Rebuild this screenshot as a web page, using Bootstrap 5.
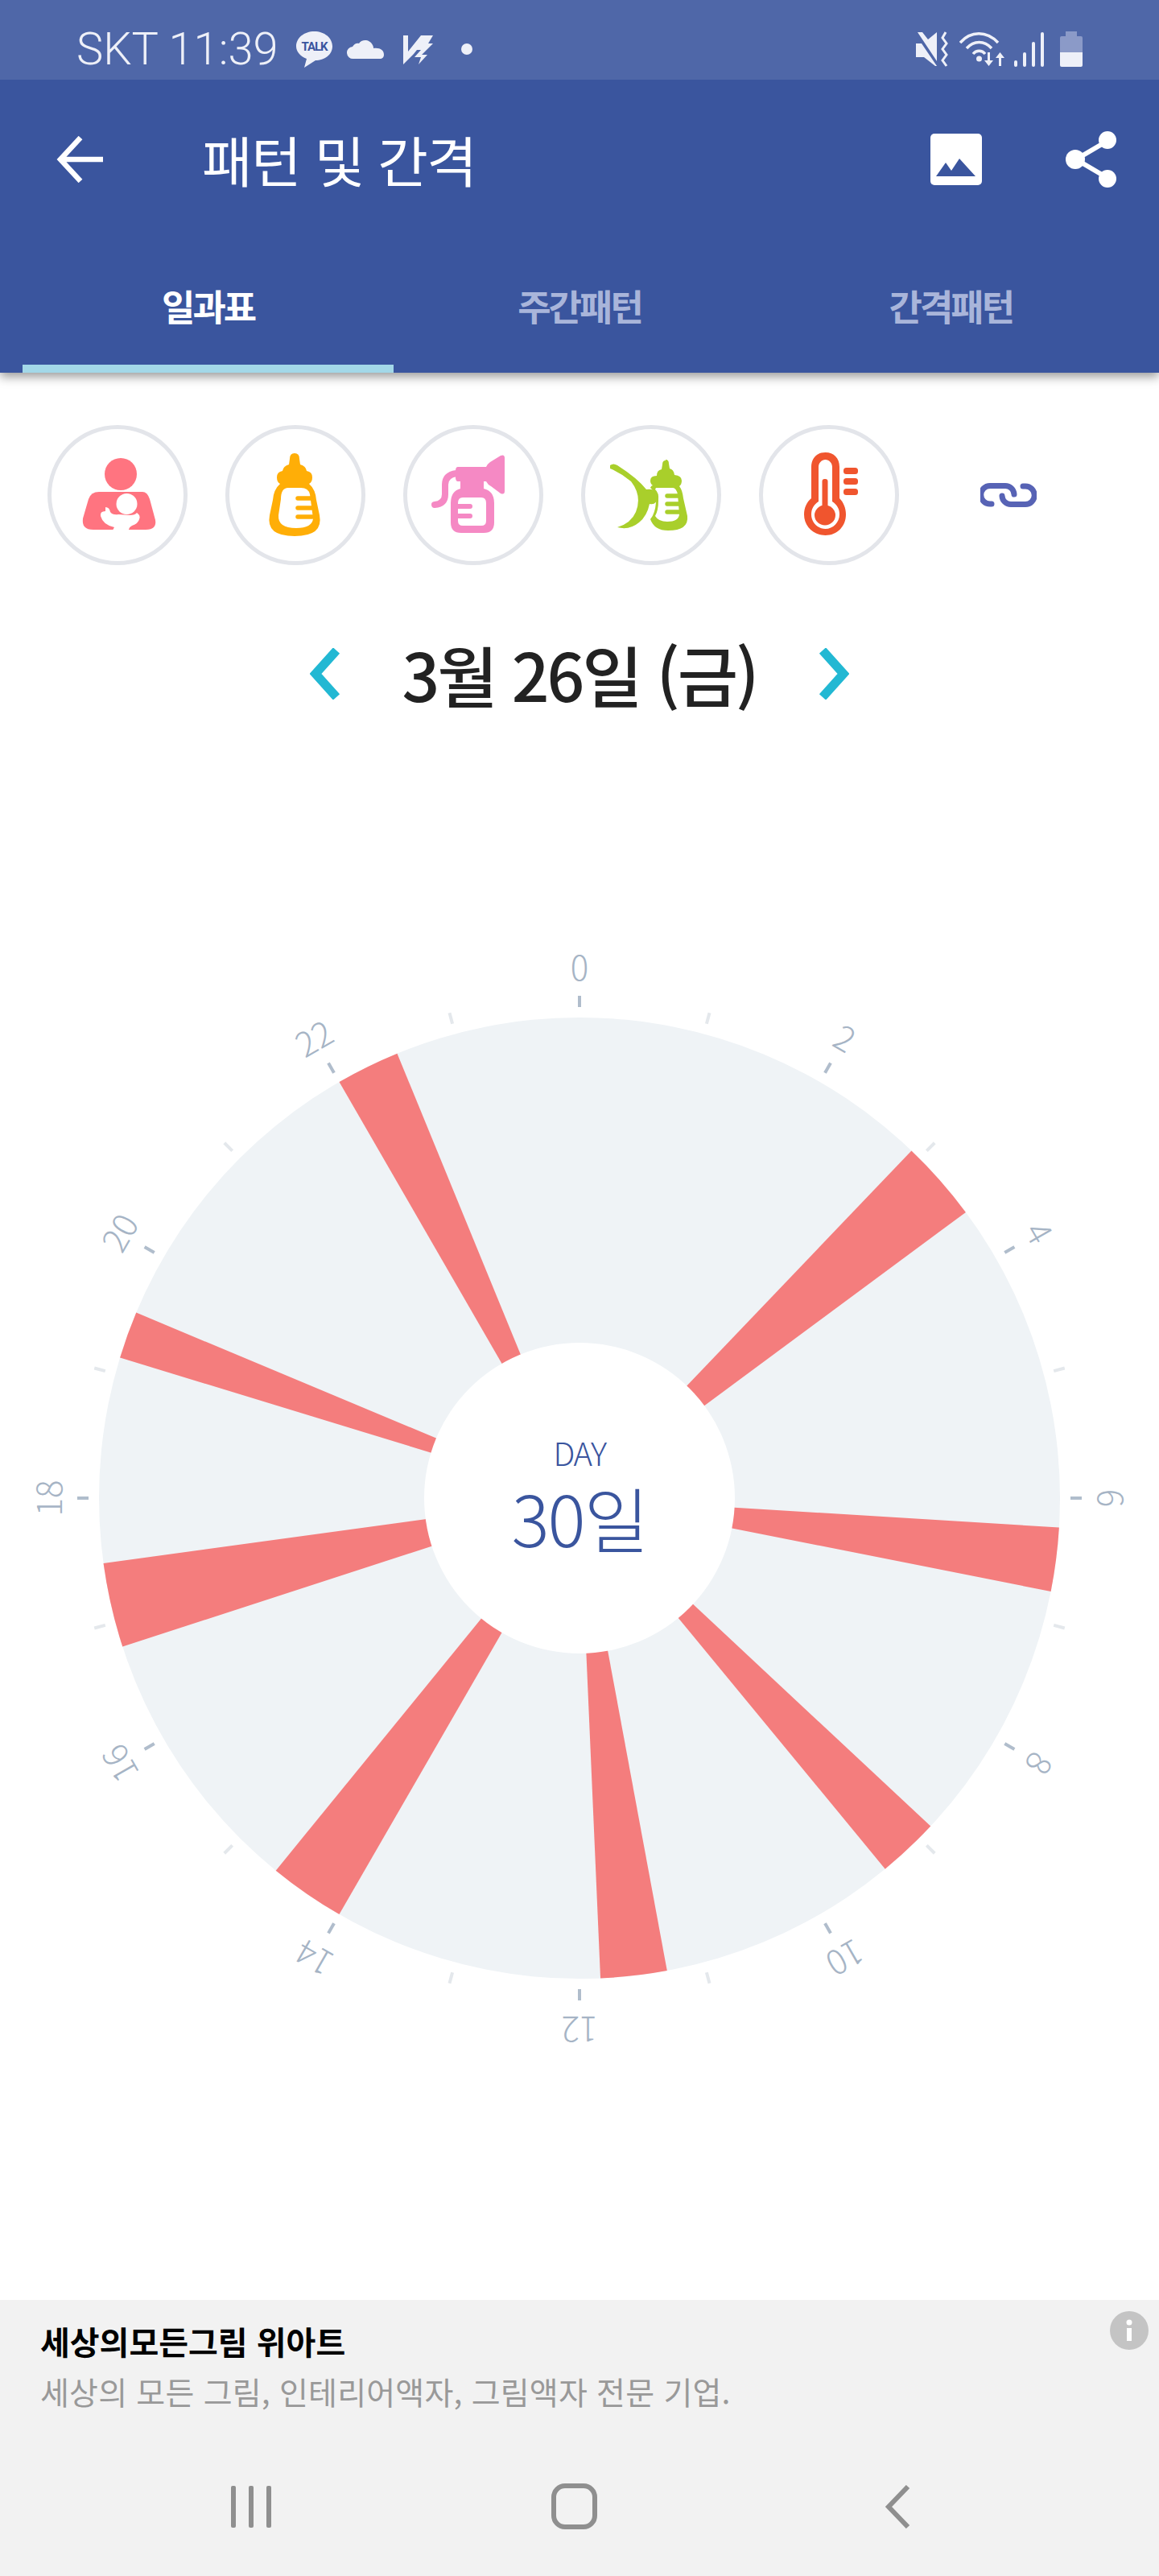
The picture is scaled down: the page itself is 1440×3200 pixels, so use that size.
<!DOCTYPE html>
<html lang="ko">
<head>
  <meta charset="UTF-8" />
  <meta name="viewport" content="width=device-width, initial-scale=1" />
  <title>패턴 및 간격</title>
  <link href="https://cdn.jsdelivr.net/npm/bootstrap@5.3.0/dist/css/bootstrap.min.css" rel="stylesheet" />
  <style>
    body {
      background: #fff;
      font-family: "Noto Sans CJK KR", "Noto Sans", sans-serif;
    }
    svg { display: block; flex-shrink: 0; }

    .status-strip {
      height: 99px;
      background: #4f67a8;
      color: #eef0f8;
      padding: 22px 95px 0;
      position: relative;
      z-index: 2;
    }
    .status-text {
      font-family: Roboto, sans-serif;
      font-weight: 300;
      font-size: 56px;
      line-height: 1;
      margin-right: 4px;
    }
    .status-left { gap: 17px; }
    .status-right { gap: 12px; }
    .bolt-icon { margin-left: 7px; }

    .app-head { background: #3a559e; height: 364px; box-shadow: 0 5px 12px rgba(0,0,0,.4); position: relative; z-index: 1; }
    .app-toolbar { height: 198px; padding: 0 52px 0 70px; }
    .app-title {
      font-size: 68px;
      line-height: 1;
      color: #fff;
      margin: 0 0 0 123px;
      letter-spacing: -1.500px;
      font-weight: 400;
    }
    .toolbar-actions { gap: 104px; }

    .tab-strip { margin: 0 28px; }
    .tab-strip .nav-link {
      color: #a9b5da;
      font-size: 45px;
      font-weight: 700;
      line-height: 45px;
      letter-spacing: -3px;
      padding: 60px 0 51px;
      border-bottom: 10px solid transparent;
      border-radius: 0;
    }
    .tab-strip .nav-link.active { color: #fff; border-bottom-color: #a3d8e8; }

    .entry-row { margin-top: 65px; padding-left: 59px; gap: 47px; }
    .entry-circle {
      width: 174px;
      height: 174px;
      border: 5px solid #e3e5ea;
      border-radius: 50%;
      background: #fff;
    }
    .link-btn { margin-left: 54px; }

    .date-row { margin-top: 90px; gap: 77px; height: 90px; }
    .date-text {
      font-size: 82px;
      line-height: 90px;
      font-weight: 500;
      color: #222;
      letter-spacing: -3px;
      white-space: nowrap;
    }

    .dial { margin-top: 118px; }
    .dial-hour { font-size: 42px; font-weight: 300; fill: #a6b4c5; }
    .dial-caption { font-size: 40px; font-weight: 300; fill: #3a559e; letter-spacing: -1.500px; }
    .dial-count { font-size: 88px; font-weight: 300; fill: #3a559e; letter-spacing: -2px; }

    .ad-panel { background: #f2f2f2; height: 343px; position: relative; }
    .ad-copy { padding: 28px 50px 0; }
    .ad-title { font-size: 40px; font-weight: 700; line-height: 46px; color: #000; }
    .ad-sub { font-size: 39px; line-height: 46px; color: #999; margin-top: 16px; letter-spacing: .2px; }
    .ad-info { position: absolute; right: 13px; top: 14px; }
    .softkeys { padding: 0 309px 0 287px; margin-top: 92px; }
    .home-key { margin-right: 10px; }
  </style>
</head>
<body>
<div class="d-flex flex-column min-vh-100">

  <!-- Status bar -->
  <div class="status-strip d-flex align-items-center justify-content-between">
    <div class="status-left d-flex align-items-center">
      <span class="status-text">SKT 11:39</span>
      <svg width="47" height="46" viewBox="0 0 47 46">
        <path fill="#eef0f8" d="M23.5 1C36 1 46 9 46 19.500S36 37 25 37L11 46l3-11C6 32 1 26 1 19.500 1 9 11 1 23.500 1z"/>
        <text x="23.500" y="25" text-anchor="middle" font-size="15" font-weight="700" fill="#3a559e" font-family="Roboto, sans-serif" letter-spacing="-1">TALK</text>
      </svg>
      <svg width="46" height="26" viewBox="0 0 46 26">
        <path fill="#eef0f8" d="M8 25a7.500 7.500 0 0 1-1-15C9 6 13 5 15 6c3-5 13-6 17 2 1 2 1 3 1 4 8-1 13 2 13 8 0 3-2 5-5 5z"/>
      </svg>
      <svg class="bolt-icon" width="38" height="38" viewBox="0 0 38 38">
        <path fill="#eef0f8" d="M0 2l6 0 0 20L22 2h15l-6 10 6 0-14 14h7L19 38l3-9h-8l8-9h-5l-4 5L0 38z"/>
      </svg>
      <svg class="ms-3" width="16" height="16" viewBox="0 0 16 16"><circle cx="8" cy="8" r="7" fill="#eef0f8"/></svg>
    </div>
    <div class="status-right d-flex align-items-center">
      <svg width="42" height="44" viewBox="0 0 42 44">
        <path fill="#eef0f8" d="M0 15h7l19 28h-2L10 32H0zM2 1l24 36V1L15 10 8 1z"/>
        <path fill="none" stroke="#eef0f8" stroke-width="3" d="M37 1l-4 7 5 7-5 7 5 7-5 7 5 7"/>
      </svg>
      <svg width="56" height="44" viewBox="0 0 56 44">
        <g fill="none" stroke="#eef0f8" stroke-width="3.500">
          <path d="M1 14C14 -1 34 -1 48 14"/>
          <path d="M9 21C18 11 31 11 40 21"/>
          <path d="M17 28C21 23 28 23 32 28"/>
        </g>
        <circle cx="24.500" cy="34" r="3.500" fill="#eef0f8"/>
        <path fill="#eef0f8" d="M35 26h3v10h4l-5.500 7-5.500-7h4zM49 43h3V33h4l-5.500-7-5.500 7h4z"/>
      </svg>
      <svg width="37" height="44" viewBox="0 0 37 44">
        <g fill="#eef0f8">
          <rect x="0" y="36" width="4" height="8" rx="2"/>
          <rect x="11" y="26" width="4" height="18" rx="2"/>
          <rect x="22" y="13" width="4" height="31" rx="2"/>
          <rect x="33" y="1" width="4" height="43" rx="2"/>
        </g>
      </svg>
      <svg class="ms-2" width="28" height="44" viewBox="0 0 28 44">
        <path fill="#8b9ac8" d="M7 0h14v6h5a2 2 0 0 1 2 2v18H0V8a2 2 0 0 1 2-2h5z"/>
        <path fill="#eef0f8" d="M0 26h28v16a2 2 0 0 1-2 2H2a2 2 0 0 1-2-2z"/>
      </svg>
    </div>
  </div>

  <!-- App bar with tabs -->
  <header class="app-head">
    <div class="app-toolbar d-flex align-items-center">
      <svg width="58" height="58" viewBox="0 0 58 58">
        <path fill="none" stroke="#fff" stroke-width="6.500" d="M58 29H5M30 2L5 29l25 27"/>
      </svg>
      <h1 class="app-title flex-grow-1">패턴 및 간격</h1>
      <div class="toolbar-actions d-flex align-items-center">
        <svg width="64" height="64" viewBox="0 0 64 64">
          <rect width="64" height="64" rx="5" fill="#fff"/>
          <path fill="#3a559e" d="M7 53l12-17 7 10 10-15 20 22z"/>
        </svg>
        <svg width="64" height="70" viewBox="0 0 64 70">
          <path fill="none" stroke="#fff" stroke-width="6" d="M52 12L13 35l39 23"/>
          <circle cx="52" cy="11" r="11" fill="#fff"/>
          <circle cx="12" cy="35" r="12" fill="#fff"/>
          <circle cx="52" cy="59" r="11" fill="#fff"/>
        </svg>
      </div>
    </div>
    <ul class="nav nav-justified tab-strip">
      <li class="nav-item"><a class="nav-link active" href="#">일과표</a></li>
      <li class="nav-item"><a class="nav-link" href="#">주간패턴</a></li>
      <li class="nav-item"><a class="nav-link" href="#">간격패턴</a></li>
    </ul>
  </header>

  <!-- Entry type buttons -->
  <div class="entry-row d-flex align-items-center">
    <div class="entry-circle">
      <svg width="164" height="164" viewBox="5 5 164 164">
        <circle cx="91" cy="61" r="20" fill="#ff7480"/>
        <path fill="#ff7480" d="M64 83h54q6 0 9 9l7 26q2 12-12 12H57q-15 0-13-14l7-24q3-9 13-9z"/>
        <ellipse cx="98.500" cy="98" rx="13" ry="13" fill="#fff"/>
        <path fill="#fff" d="M72 102q5 0 6 6 3 4 10 3l14 1q7 0 9-3 5 3 3 8-1 5-9 8-7 3-3 15H76l7-13q-14-3-17-14-1-6 6-6z"/>
      </svg>
    </div>
    <div class="entry-circle">
      <svg width="164" height="164" viewBox="5 5 164 164">
        <path fill="#ffae07" d="M86 35Q92 35 92 42L93 49Q100 51 101 57Q108 58 108 65Q108 71 104 73Q112 80 113 93L117 112Q122 138 86 138Q50 138 55 112L59 93Q60 80 68 73Q64 71 64 65Q64 58 71 57Q72 51 79 49L80 42Q80 35 86 35Z"/>
        <path fill="#fff" d="M78 78H94Q103 78 105 86L109 116Q108 128 88 128Q65 128 66 112L69 92Q69 78 78 78Z"/>
        <path stroke="#ffae07" stroke-width="5.500" stroke-linecap="round" d="M90 91h16M90 103h17M90 114h18"/>
      </svg>
    </div>
    <div class="entry-circle">
      <svg width="164" height="164" viewBox="5 5 164 164">
        <path fill="#f589c4" d="M68 52h35q2-4 5-6l13-8q5-2 5 3v41q0 5-5 3l-12-9q-4-2-6-6h-3v9q13 3 13 18v24q0 13-13 13H72q-13 0-13-13v-24q0-15 12-18v-9h-3q-3 0-3-5v-8q0-5 3-5z"/>
        <path fill="#fff" d="M74 90h23q6 0 6 7v22q0 6-6 6H74q-6 0-6-6V97q0-7 6-7z"/>
        <path stroke="#f589c4" stroke-width="6" stroke-linecap="round" d="M68 101h15M68 113h15"/>
        <path fill="none" stroke="#f589c4" stroke-width="8" stroke-linecap="round" d="M66 60q-14 2-14 14v12q0 12-13 13"/>
      </svg>
    </div>
    <div class="entry-circle">
      <svg width="164" height="164" viewBox="5 5 164 164">
        <path fill="#a9cf2b" d="M36 50Q40 47 45 50Q70 66 81 80Q94 78 95 89Q94 100 85 98Q82 113 72 121Q60 131 45 127Q62 122 68 108Q76 88 62 70Q50 60 36 54Z"/>
        <path fill="#a9cf2b" d="M105 43q4 0 4 5l1 6q5 1 6 8 9 1 9 7 0 5-3 7 4 5 5 15l5 22q2 18-24 18-17 0-22-14 6-7 7-21 2-12-7-18 1-3 3-3-3-2-3-6 0-6 8-6 0-7 6-8l1-6q0-5 4-5z"/>
        <path fill="#fff" d="M93 78h21q4 0 6 8l2 25q-1 9-15 9-11 0-15-7 4-7 4-19 1-10-4-14z"/>
        <path stroke="#a9cf2b" stroke-width="5.500" stroke-linecap="round" d="M107 88h15M107 98h15M107 108h15"/>
      </svg>
    </div>
    <div class="entry-circle">
      <svg width="164" height="164" viewBox="5 5 164 164">
        <path fill="#f0552e" d="M82.500 34C93 34 100 41 100 52v39c5 5 8 12 8 20 0 15-11 26-25.500 26S56 126 56 111c0-8 3-15 9-20V52c0-11 7-18 17.500-18z"/>
        <path fill="#fff" d="M82.500 43C87 43 91 47 91 52v43c6 4 9 9 9 16 0 10-8 18-17.500 18S65 121 65 111c0-7 3-12 9-16V52c0-5 4-9 8.500-9z"/>
        <ellipse cx="82" cy="112" rx="13" ry="12.500" fill="#f0552e"/>
        <rect x="78.500" y="67" width="7" height="38" rx="3" fill="#f0552e"/>
        <g fill="#f0552e">
          <rect x="105" y="53" width="18" height="8" rx="3.500"/>
          <rect x="105" y="66" width="18" height="8" rx="3.500"/>
          <rect x="105" y="79" width="18" height="8" rx="3.500"/>
        </g>
      </svg>
    </div>
    <svg class="link-btn" width="70" height="30" viewBox="0 0 70 30">
      <path fill="none" stroke="#5763b5" stroke-width="7" stroke-linecap="round" d="M14 26h-2a11 11 0 0 1 0-22.500h19A11 11 0 0 1 42 14M27 16a11 11 0 0 0 11 10.500h18A11 11 0 0 0 56 4h-3"/>
    </svg>
  </div>

  <!-- Date selector -->
  <div class="date-row d-flex justify-content-center align-items-center">
    <svg width="38" height="64" viewBox="0 0 38 64">
      <path fill="none" stroke="#22b8d3" stroke-width="11" d="M33 3L7 32l26 29"/>
    </svg>
    <span class="date-text">3월 26일 (금)</span>
    <svg width="38" height="64" viewBox="0 0 38 64">
      <path fill="none" stroke="#22b8d3" stroke-width="11" d="M5 3l26 29L5 61"/>
    </svg>
  </div>

  <!-- 24h dial -->
  <svg class="dial" id="dial" width="1440" height="1600" viewBox="0 0 1440 1600"></svg>

  <!-- Ad + soft keys -->
  <div class="ad-panel mt-auto">
    <div class="ad-copy">
      <div class="ad-title">세상의모든그림 위아트</div>
      <div class="ad-sub">세상의 모든 그림, 인테리어액자, 그림액자 전문 기업.</div>
    </div>
    <svg class="ad-info" width="48" height="48" viewBox="0 0 48 48">
      <circle cx="24" cy="24" r="24" fill="#c4c4c4"/>
      <circle cx="24" cy="14" r="3.500" fill="#fff"/>
      <rect x="21" y="21" width="6" height="16" fill="#fff"/>
    </svg>
    <div class="softkeys d-flex align-items-center justify-content-between">
      <svg width="50" height="54" viewBox="0 0 50 54">
        <g fill="#8f8f8f">
          <rect x="0" y="1" width="6" height="52" rx="2"/>
          <rect x="22" y="1" width="6" height="52" rx="2"/>
          <rect x="44" y="1" width="6" height="52" rx="2"/>
        </g>
      </svg>
      <svg class="home-key" width="57" height="57" viewBox="0 0 57 57">
        <rect x="3" y="3" width="51" height="51" rx="14" fill="none" stroke="#8f8f8f" stroke-width="6"/>
      </svg>
      <svg width="32" height="54" viewBox="0 0 32 54">
        <path fill="none" stroke="#8f8f8f" stroke-width="6" d="M29 2L5 27l24 25"/>
      </svg>
    </div>
  </div>
</div>

<script src="https://cdn.jsdelivr.net/npm/bootstrap@5.3.0/dist/js/bootstrap.bundle.min.js"></script>
<script>
  // angles in degrees clockwise from 0h (top)
  const sessions = [
    [43.7, 53.5], [93.5, 101.2], [133.05, 140.5], [169.5, 177.5],
    [210, 219.2], [252, 262.2], [287, 292.7], [330, 337.7]
  ];
  const cx = 720, cy = 861, outer = 597, inner = 193;
  const NS = 'http://www.w3.org/2000/svg';
  const dial = document.getElementById('dial');

  function add(tag, attrs, text) {
    const el = document.createElementNS(NS, tag);
    for (const k in attrs) el.setAttribute(k, attrs[k]);
    if (text !== undefined) el.textContent = text;
    dial.appendChild(el);
    return el;
  }
  function pt(deg, r) {
    const a = deg * Math.PI / 180;
    return [cx + r * Math.sin(a), cy - r * Math.cos(a)];
  }

  add('circle', { cx, cy, r: outer, fill: '#eff3f6' });

  sessions.forEach(([from, to]) => {
    const [x1, y1] = pt(from, outer);
    const [x2, y2] = pt(to, outer);
    add('path', { fill: '#f47d7d', d: `M${cx} ${cy}L${x1} ${y1}A${outer} ${outer} 0 0 1 ${x2} ${y2}Z` });
  });

  add('circle', { cx, cy, r: inner, fill: '#fff' });

  for (let h = 0; h < 24; h++) {
    const deg = h * 15;
    const major = h % 2 === 0;
    const [x1, y1] = pt(deg, 610);
    const [x2, y2] = pt(deg, 624);
    add('line', { x1, y1, x2, y2, stroke: major ? '#b0bdcc' : '#e4e8ec', 'stroke-width': 4 });
    if (major) {
      add('text', {
        class: 'dial-hour', x: cx, y: cy - 662,
        'text-anchor': 'middle', 'dominant-baseline': 'central',
        transform: `rotate(${deg} ${cx} ${cy})`
      }, h);
    }
  }

  add('text', { class: 'dial-caption', x: cx, y: 821, 'text-anchor': 'middle' }, 'DAY');
  add('text', { class: 'dial-count', x: cx, y: 922, 'text-anchor': 'middle' }, '30일');
</script>
</body>
</html>
